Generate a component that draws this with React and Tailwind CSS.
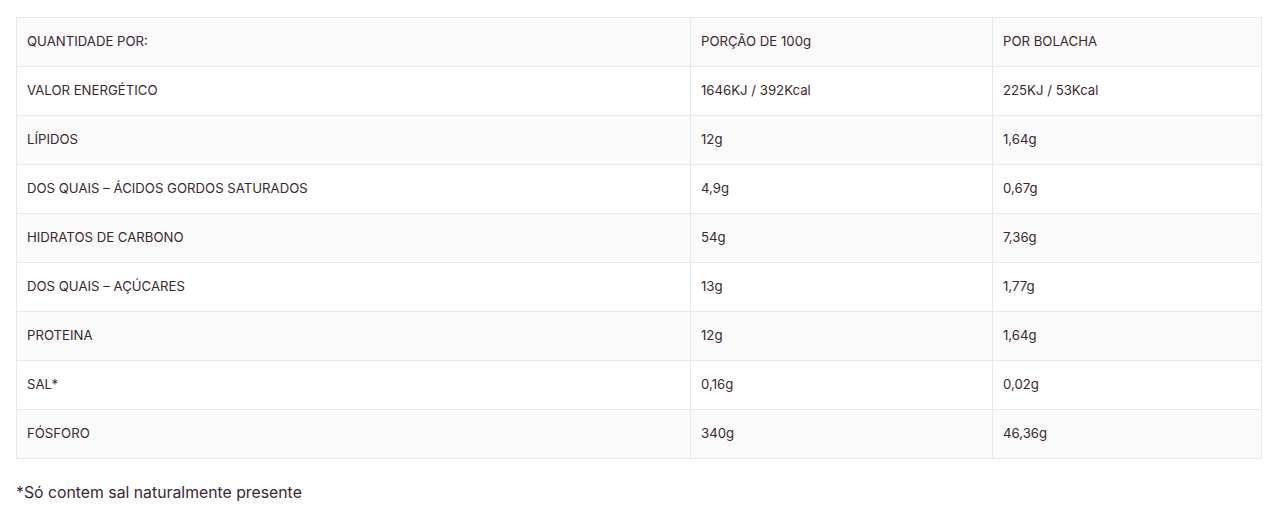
const rows = [
  ['QUANTIDADE POR:', 'PORÇÃO DE 100g', 'POR BOLACHA'],
  ['VALOR ENERGÉTICO', '1646KJ / 392Kcal', '225KJ / 53Kcal'],
  ['LÍPIDOS', '12g', '1,64g'],
  ['DOS QUAIS – ÁCIDOS GORDOS SATURADOS', '4,9g', '0,67g'],
  ['HIDRATOS DE CARBONO', '54g', '7,36g'],
  ['DOS QUAIS – AÇÚCARES', '13g', '1,77g'],
  ['PROTEINA', '12g', '1,64g'],
  ['SAL*', '0,16g', '0,02g'],
  ['FÓSFORO', '340g', '46,36g'],
];

export default function App() {
  return (
    <div className="bg-white pt-[17px] pl-4 font-['Inter',sans-serif] text-[#3b2631]">
      <table className="w-[1245px] border-collapse border border-[#e8e8e8] text-[13.2px] table-fixed">
        <colgroup>
          <col className="w-[674px]" />
          <col className="w-[302px]" />
          <col className="w-[269px]" />
        </colgroup>
        <tbody>
          {rows.map((r, i) => (
            <tr key={i} className={i % 2 === 0 ? 'bg-[#fafafa]' : 'bg-white'}>
              {r.map((c, j) => (
                <td
                  key={j}
                  className="h-[49px] border border-[#e8e8e8] px-[10px] align-middle"
                >
                  {c}
                </td>
              ))}
            </tr>
          ))}
        </tbody>
      </table>
      <p className="mt-[24px] text-[15.8px] leading-5">*Só contem sal naturalmente presente</p>
    </div>
  );
}
